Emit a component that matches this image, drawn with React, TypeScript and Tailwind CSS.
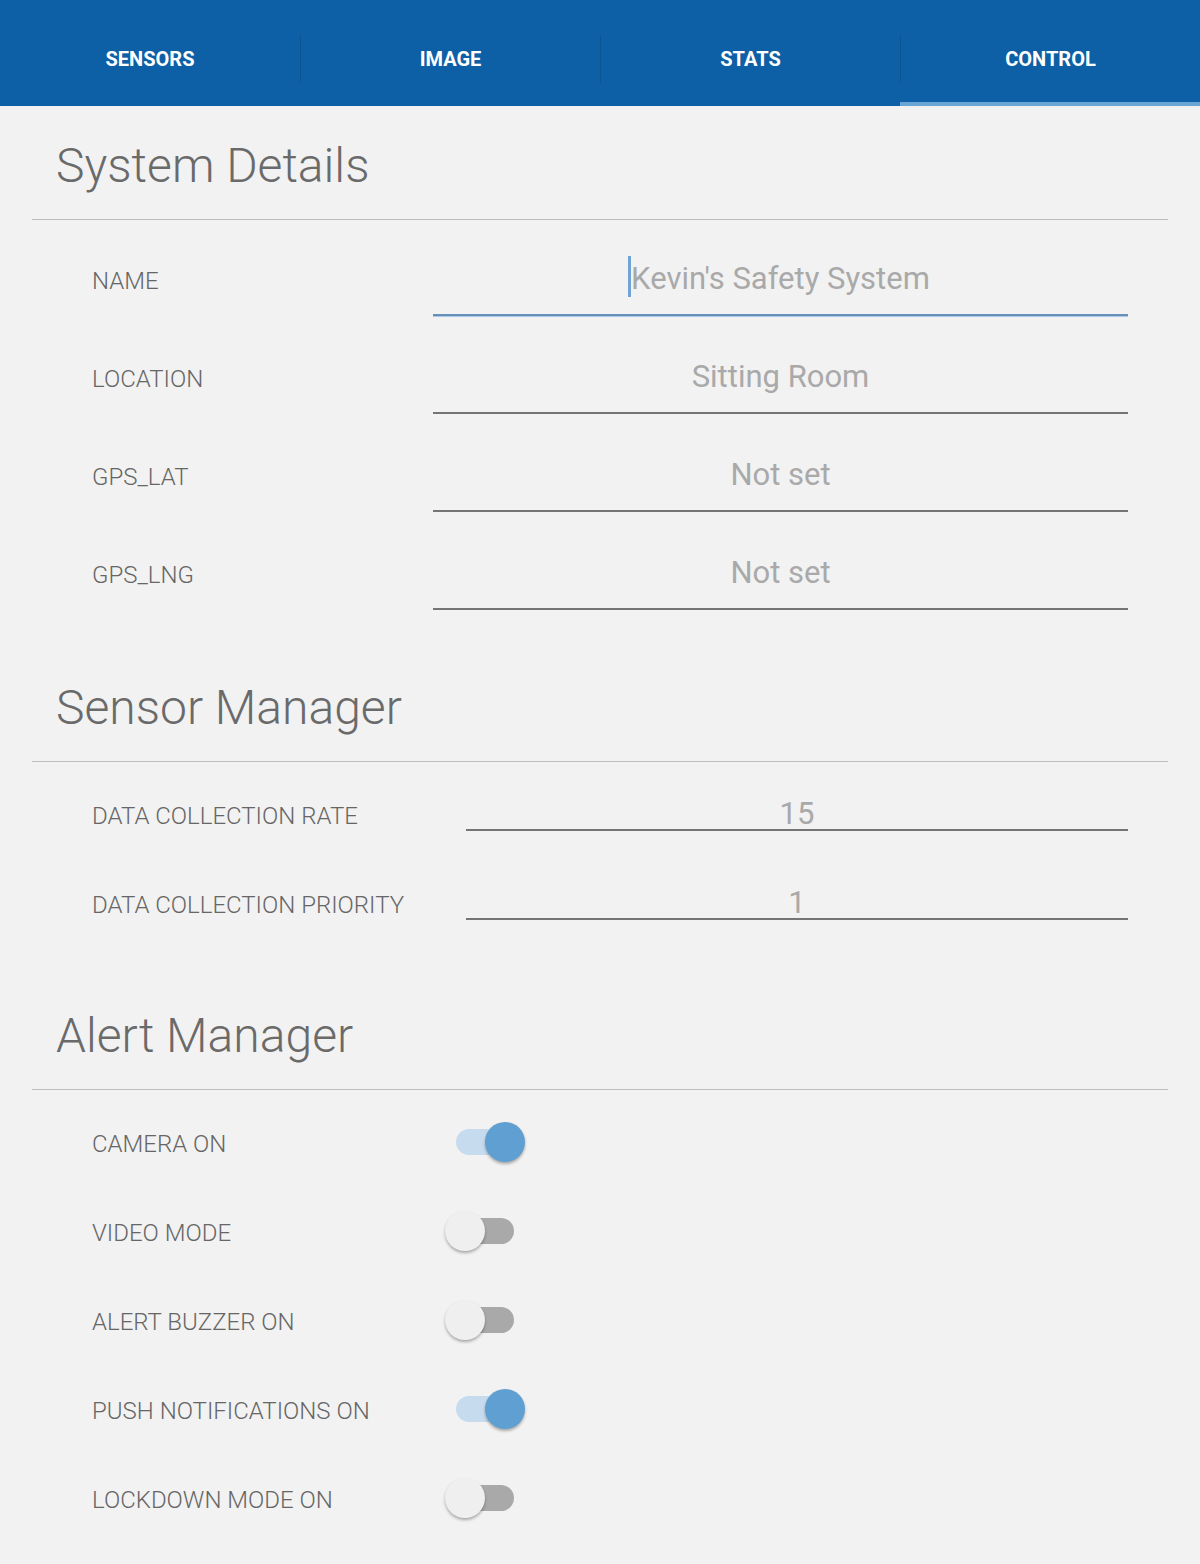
import { useState } from 'react';

const tabs = ['SENSORS', 'IMAGE', 'STATS', 'CONTROL'];

const details = [
  { label: 'NAME', value: "Kevin's Safety System", focused: true },
  { label: 'LOCATION', value: 'Sitting Room' },
  { label: 'GPS_LAT', value: 'Not set' },
  { label: 'GPS_LNG', value: 'Not set' },
];

const sensorSettings = [
  { label: 'DATA COLLECTION RATE', value: '15' },
  { label: 'DATA COLLECTION PRIORITY', value: '1' },
];

const alertSettings = [
  { label: 'CAMERA ON', on: true },
  { label: 'VIDEO MODE', on: false },
  { label: 'ALERT BUZZER ON', on: false },
  { label: 'PUSH NOTIFICATIONS ON', on: true },
  { label: 'LOCKDOWN MODE ON', on: false },
];

function SectionHeading({ title, first }: { title: string; first?: boolean }) {
  return (
    <div
      className={`${first ? 'pt-[36px]' : 'pt-[72px]'} pb-[29px] pl-[24px] border-b border-[#bdbdbd] text-[48px] leading-[48px] font-light text-[#6a6a6a]`}
    >
      {title}
    </div>
  );
}

function Toggle({ initial }: { initial: boolean }) {
  const [on, setOn] = useState(initial);
  return (
    <button
      onClick={() => setOn(!on)}
      className="relative mt-[32px] w-[80px] h-[40px] flex items-center shrink-0"
    >
      <span
        className={`ml-[11px] w-[58px] h-[26px] rounded-full ${on ? 'bg-[#c6dcee]' : 'bg-[#a9a9a9]'}`}
      />
      {/* thumb */}
      <span
        className={`absolute top-0 w-[40px] h-[40px] rounded-full shadow-[0_2px_3px_rgba(0,0,0,0.3)] ${
          on ? 'left-[40px] bg-[#5f9fd1]' : 'left-0 bg-[#efefef]'
        }`}
      />
    </button>
  );
}

export default function App() {
  const [active, setActive] = useState('CONTROL');

  return (
    <div className="min-h-[1564px] bg-[#f2f2f2] font-[Roboto,sans-serif]">
      {/* Tab bar */}
      <div className="flex h-[106px] bg-[#0d60a5]">
        {tabs.map((tab, i) => (
          <div key={tab} className="flex-1 flex flex-col cursor-pointer" onClick={() => setActive(tab)}>
            <div className="flex-1 flex items-center pt-[15px]">
              {i > 0 ? <div className="w-px h-[48px] bg-[#0a5493]" /> : null}
              <span className="flex-1 text-center text-white font-bold text-[20px] leading-[20px]">
                {tab}
              </span>
            </div>
            <div className={`h-[4px] ${active === tab ? 'bg-[#69a5d5]' : ''}`} />
          </div>
        ))}
      </div>

      <div className="px-[32px]">
        {/* System Details */}
        <SectionHeading title="System Details" first />
        {details.map((d) => (
          <div key={d.label} className="flex h-[98px]">
            <div className="w-[401px] h-[96px] pl-[60px] pb-[23px] flex items-end text-[24px] leading-[23px] font-light text-[#666]">
              {d.label}
            </div>
            <div
              className={`w-[695px] h-[96px] pb-[20px] flex items-end justify-center border-b-2 text-[31px] leading-[30px] text-[#a9a9a9] ${
                d.focused ? 'border-[#6690ba] shadow-[0_1px_0_#abc8e4]' : 'border-[#757575]'
              }`}
            >
              <span className="relative">
                {d.focused ? (
                  <span className="absolute left-[-3px] top-[-8px] w-[3px] h-[41px] bg-[#6fa4d4]" />
                ) : null}
                {d.value}
              </span>
            </div>
          </div>
        ))}

        {/* Sensor Manager */}
        <SectionHeading title="Sensor Manager" />
        {sensorSettings.map((s) => (
          <div key={s.label} className="flex h-[89px]">
            <div className="w-[434px] h-[69px] pl-[60px] pb-[3px] flex items-end text-[24px] leading-[23px] font-light text-[#666] whitespace-nowrap">
              {s.label}
            </div>
            <div className="w-[662px] h-[69px] flex items-end justify-center border-b-2 border-[#757575] text-[31px] leading-[30px] text-[#a9a9a9]">
              {s.value}
            </div>
          </div>
        ))}

        {/* Alert Manager */}
        <SectionHeading title="Alert Manager" />
        {alertSettings.map((a) => (
          <div key={a.label} className="flex h-[89px]">
            <div className="w-[413px] h-[69px] pl-[60px] pb-[3px] flex items-end text-[24px] leading-[23px] font-light text-[#666] whitespace-nowrap">
              {a.label}
            </div>
            <Toggle initial={a.on} />
          </div>
        ))}
      </div>
    </div>
  );
}
